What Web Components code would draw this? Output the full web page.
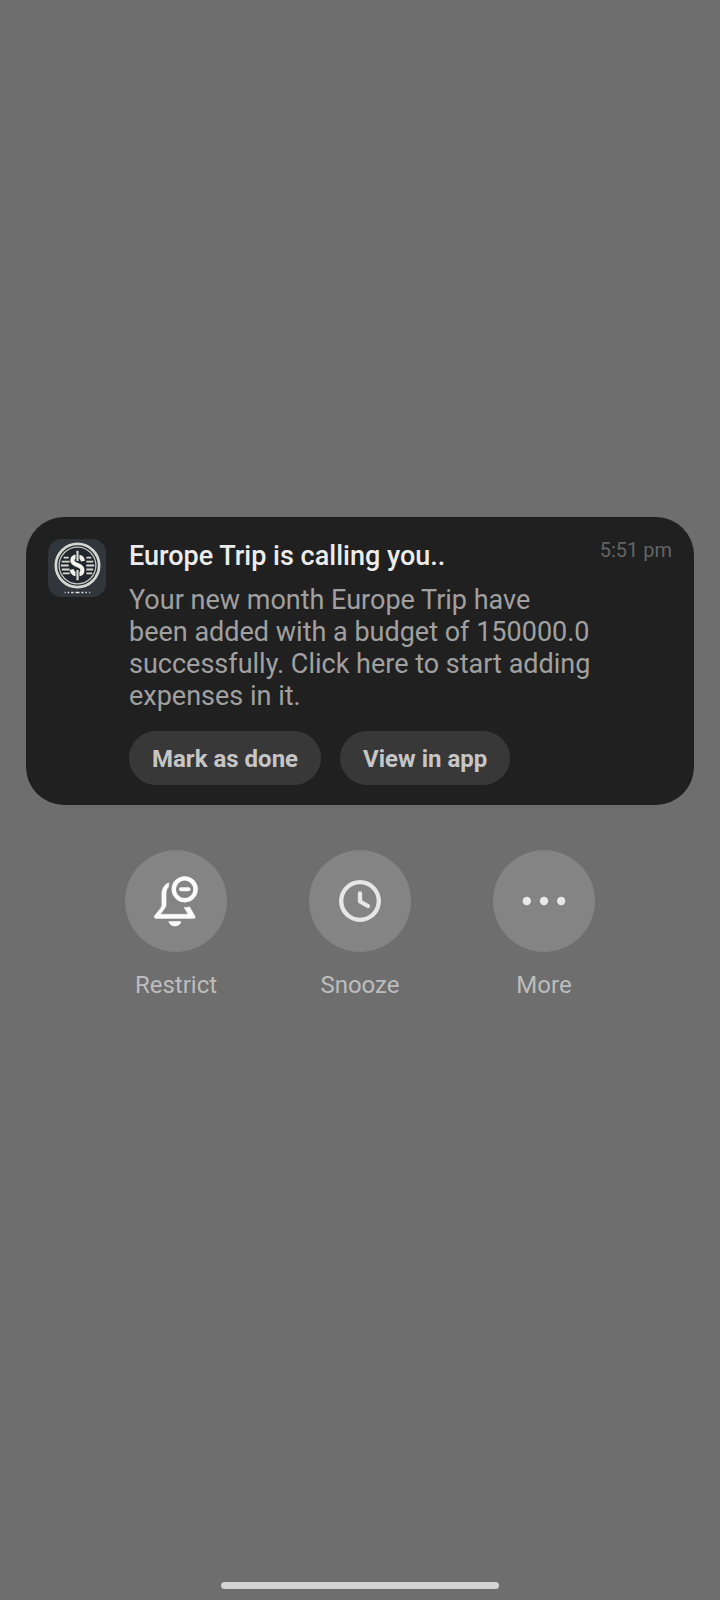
<!DOCTYPE html>
<html lang="en">
<head>
<meta charset="utf-8">
<meta name="viewport" content="width=device-width, initial-scale=1">
<title>Notification options</title>
<style>
  body { margin: 0; background: #6e6e6e; font-family: Roboto, "Liberation Sans", sans-serif; }
</style>
</head>
<body>
<notification-screen>
  <notification-card>
    <app-icon slot="icon"></app-icon>
    <span slot="title">Europe Trip is calling you..</span>
    <time slot="time" datetime="17:51">5:51 pm</time>
    <span slot="message">Your new month Europe Trip have been added with a budget of 150000.0 successfully. Click here to start adding expenses in it.</span>
    <pill-button slot="actions">Mark as done</pill-button>
    <pill-button slot="actions">View in app</pill-button>
  </notification-card>
  <quick-actions>
    <quick-action>
      <svg slot="icon" width="52" height="52" viewBox="0 0 52 52" fill="none" stroke="#fcfcfc" stroke-width="4.400" stroke-linejoin="round" aria-hidden="true">
        <path d="M19 7.700C14 9.500 11.800 14 11.800 19V30C11.800 31.500 11 32.500 10 34L4.700 40.500C3.700 42 4.300 43.500 6 43.500H43.500C45.200 43.500 45.600 42 44.800 40.700L39.500 31.700C38 32.600 36 32.600 34 32.300L38 39.200H10.500L15 33C15.800 32 16.100 31 16.100 29.500V20C16.100 16 16.700 14 18.500 12Z" fill="#fcfcfc" stroke="#fcfcfc" stroke-width=".4"/>
        <circle cx="34.700" cy="14.300" r="10.900"/>
        <path d="M31 14.300H38.500" stroke-width="4" stroke-linecap="round"/>
        <path d="M18.500 46.300H31.200C30.200 53 19.500 53 18.500 46.300Z" fill="#fcfcfc" stroke="none"/>
      </svg>
      Restrict
    </quick-action>
    <quick-action>
      <svg slot="icon" width="42" height="42" viewBox="0 0 42 42" fill="none" stroke="#e6e6e6" stroke-width="4.300" stroke-linecap="round" stroke-linejoin="round" aria-hidden="true">
        <circle cx="21" cy="21" r="18.800"/>
        <path d="M21 13.500V21.500L29 26"/>
      </svg>
      Snooze
    </quick-action>
    <quick-action>
      <svg slot="icon" width="44" height="12" viewBox="0 0 44 12" fill="#e8e8e8" aria-hidden="true">
        <circle cx="4.800" cy="6" r="4.200"/><circle cx="22" cy="6" r="4.200"/><circle cx="39.200" cy="6" r="4.200"/>
      </svg>
      More
    </quick-action>
  </quick-actions>
</notification-screen>

<script>
  const define = (name, html) => {
    const template = document.createElement('template');
    template.innerHTML = html;
    customElements.define(name, class extends HTMLElement {
      constructor() {
        super();
        this.attachShadow({ mode: 'open' }).append(template.content.cloneNode(true));
      }
    });
  };

  define('notification-screen', `
    <style>
      :host { display: flex; flex-direction: column; min-height: 100vh; box-sizing: border-box; padding: 0 26px 11px; }
      :host::before { content: ""; flex: 31; }
      main { display: flex; flex-direction: column; gap: 45px; }
      footer { flex: 35; display: flex; align-items: flex-end; justify-content: center; }
      .handle { width: 42%; max-width: 278px; height: 7px; border-radius: 4px; background: #d4d4d4; }
    </style>
    <main><slot></slot></main>
    <footer><div class="handle"></div></footer>
  `);

  define('notification-card', `
    <style>
      :host { display: block; background: #202020; border-radius: 38px; padding: 22px 22px 20px; }
      article { display: grid; grid-template-columns: 58px 1fr auto; }
      .text, .actions { margin-left: 23px; }
      .text { min-width: 0; margin-right: 7px; }
      h1 { margin: 0 0 11px; font-size: 27px; line-height: 34px; font-weight: 500; color: #ececec; }
      p { margin: 0; font-size: 27px; line-height: 32px; color: #a0a0a0; }
      .time { font-size: 20px; line-height: 22px; color: #646464; }
      .actions { grid-column: 2 / -1; display: flex; flex-wrap: wrap; gap: 19px; margin-top: 19px; }
    </style>
    <article>
      <slot name="icon"></slot>
      <div class="text">
        <h1><slot name="title"></slot></h1>
        <p><slot name="message"></slot></p>
      </div>
      <div class="time"><slot name="time"></slot></div>
      <div class="actions"><slot name="actions"></slot></div>
    </article>
  `);

  define('pill-button', `
    <style>
      :host { display: block; }
      button { font: 700 24px/28px Roboto, "Liberation Sans", sans-serif; color: #c6c6c6; background: #383838;
        border: 0; border-radius: 27px; padding: 14px 23px 12px; margin: 0; display: block; }
    </style>
    <button type="button"><slot></slot></button>
  `);

  define('app-icon', `
    <style>
      :host { display: block; width: 58px; height: 58px; }
      svg { display: block; }
    </style>
    <svg width="58" height="58" viewBox="0 0 59 59" fill="none" role="img" aria-label="Budget app">
      <rect width="59" height="59" rx="14" fill="#31353c"/>
      <circle cx="30" cy="27" r="22" fill="#22272e" stroke="#d3d7cf" stroke-width="2.800"/>
      <circle cx="30" cy="27" r="18.700" stroke="#c3c8c0" stroke-width="1.300"/>
      <path d="M16 19H21M14 23H22M13 27H21M14 31H22M15 35H22M39 19H44M39 23H46M39 27H47M39 31H46M39 35H45" stroke="#d5d9d1" stroke-width="1.900"/>
      <path d="M35.500 22.500C35 19 33 17.800 30 17.800C26.500 17.800 24.800 19.500 24.800 21.800C24.800 27.500 35 25.500 35 31.500C35 34.500 33 36 30 36C27 36 24.800 34.500 24 31" stroke="#f2f4ec" stroke-width="4.200"/>
      <path d="M30 12V22.500M30 31.500V42" stroke="#22272e" stroke-width="4"/>
      <path d="M30 12V22.500M30 31.500V42" stroke="#d5d9d1" stroke-width="2.200"/>
      <path d="M17 54.500H18M20 54.500H21.500M23.500 54.500H26M28 54.500H32M34 54.500H36M38 54.500H39.500M42 54.500H43" stroke="#dfe2dc" stroke-width="1.500"/>
    </svg>
  `);

  define('quick-actions', `
    <style>
      :host { display: flex; justify-content: center; gap: 82px; }
    </style>
    <slot></slot>
  `);

  define('quick-action', `
    <style>
      :host { display: block; width: 102px; }
      button { display: flex; flex-direction: column; align-items: center; gap: 19px; width: 100%; margin: 0; padding: 0;
        border: 0; background: none; color: #bdbdbd; font: 400 24px/28px Roboto, "Liberation Sans", sans-serif; }
      .disc { display: grid; place-items: center; width: 102px; height: 102px; border-radius: 50%; background: #848484; }
      ::slotted(svg) { display: block; overflow: visible; }
    </style>
    <button type="button">
      <span class="disc"><slot name="icon"></slot></span>
      <span><slot></slot></span>
    </button>
  `);
</script>
</body>
</html>
